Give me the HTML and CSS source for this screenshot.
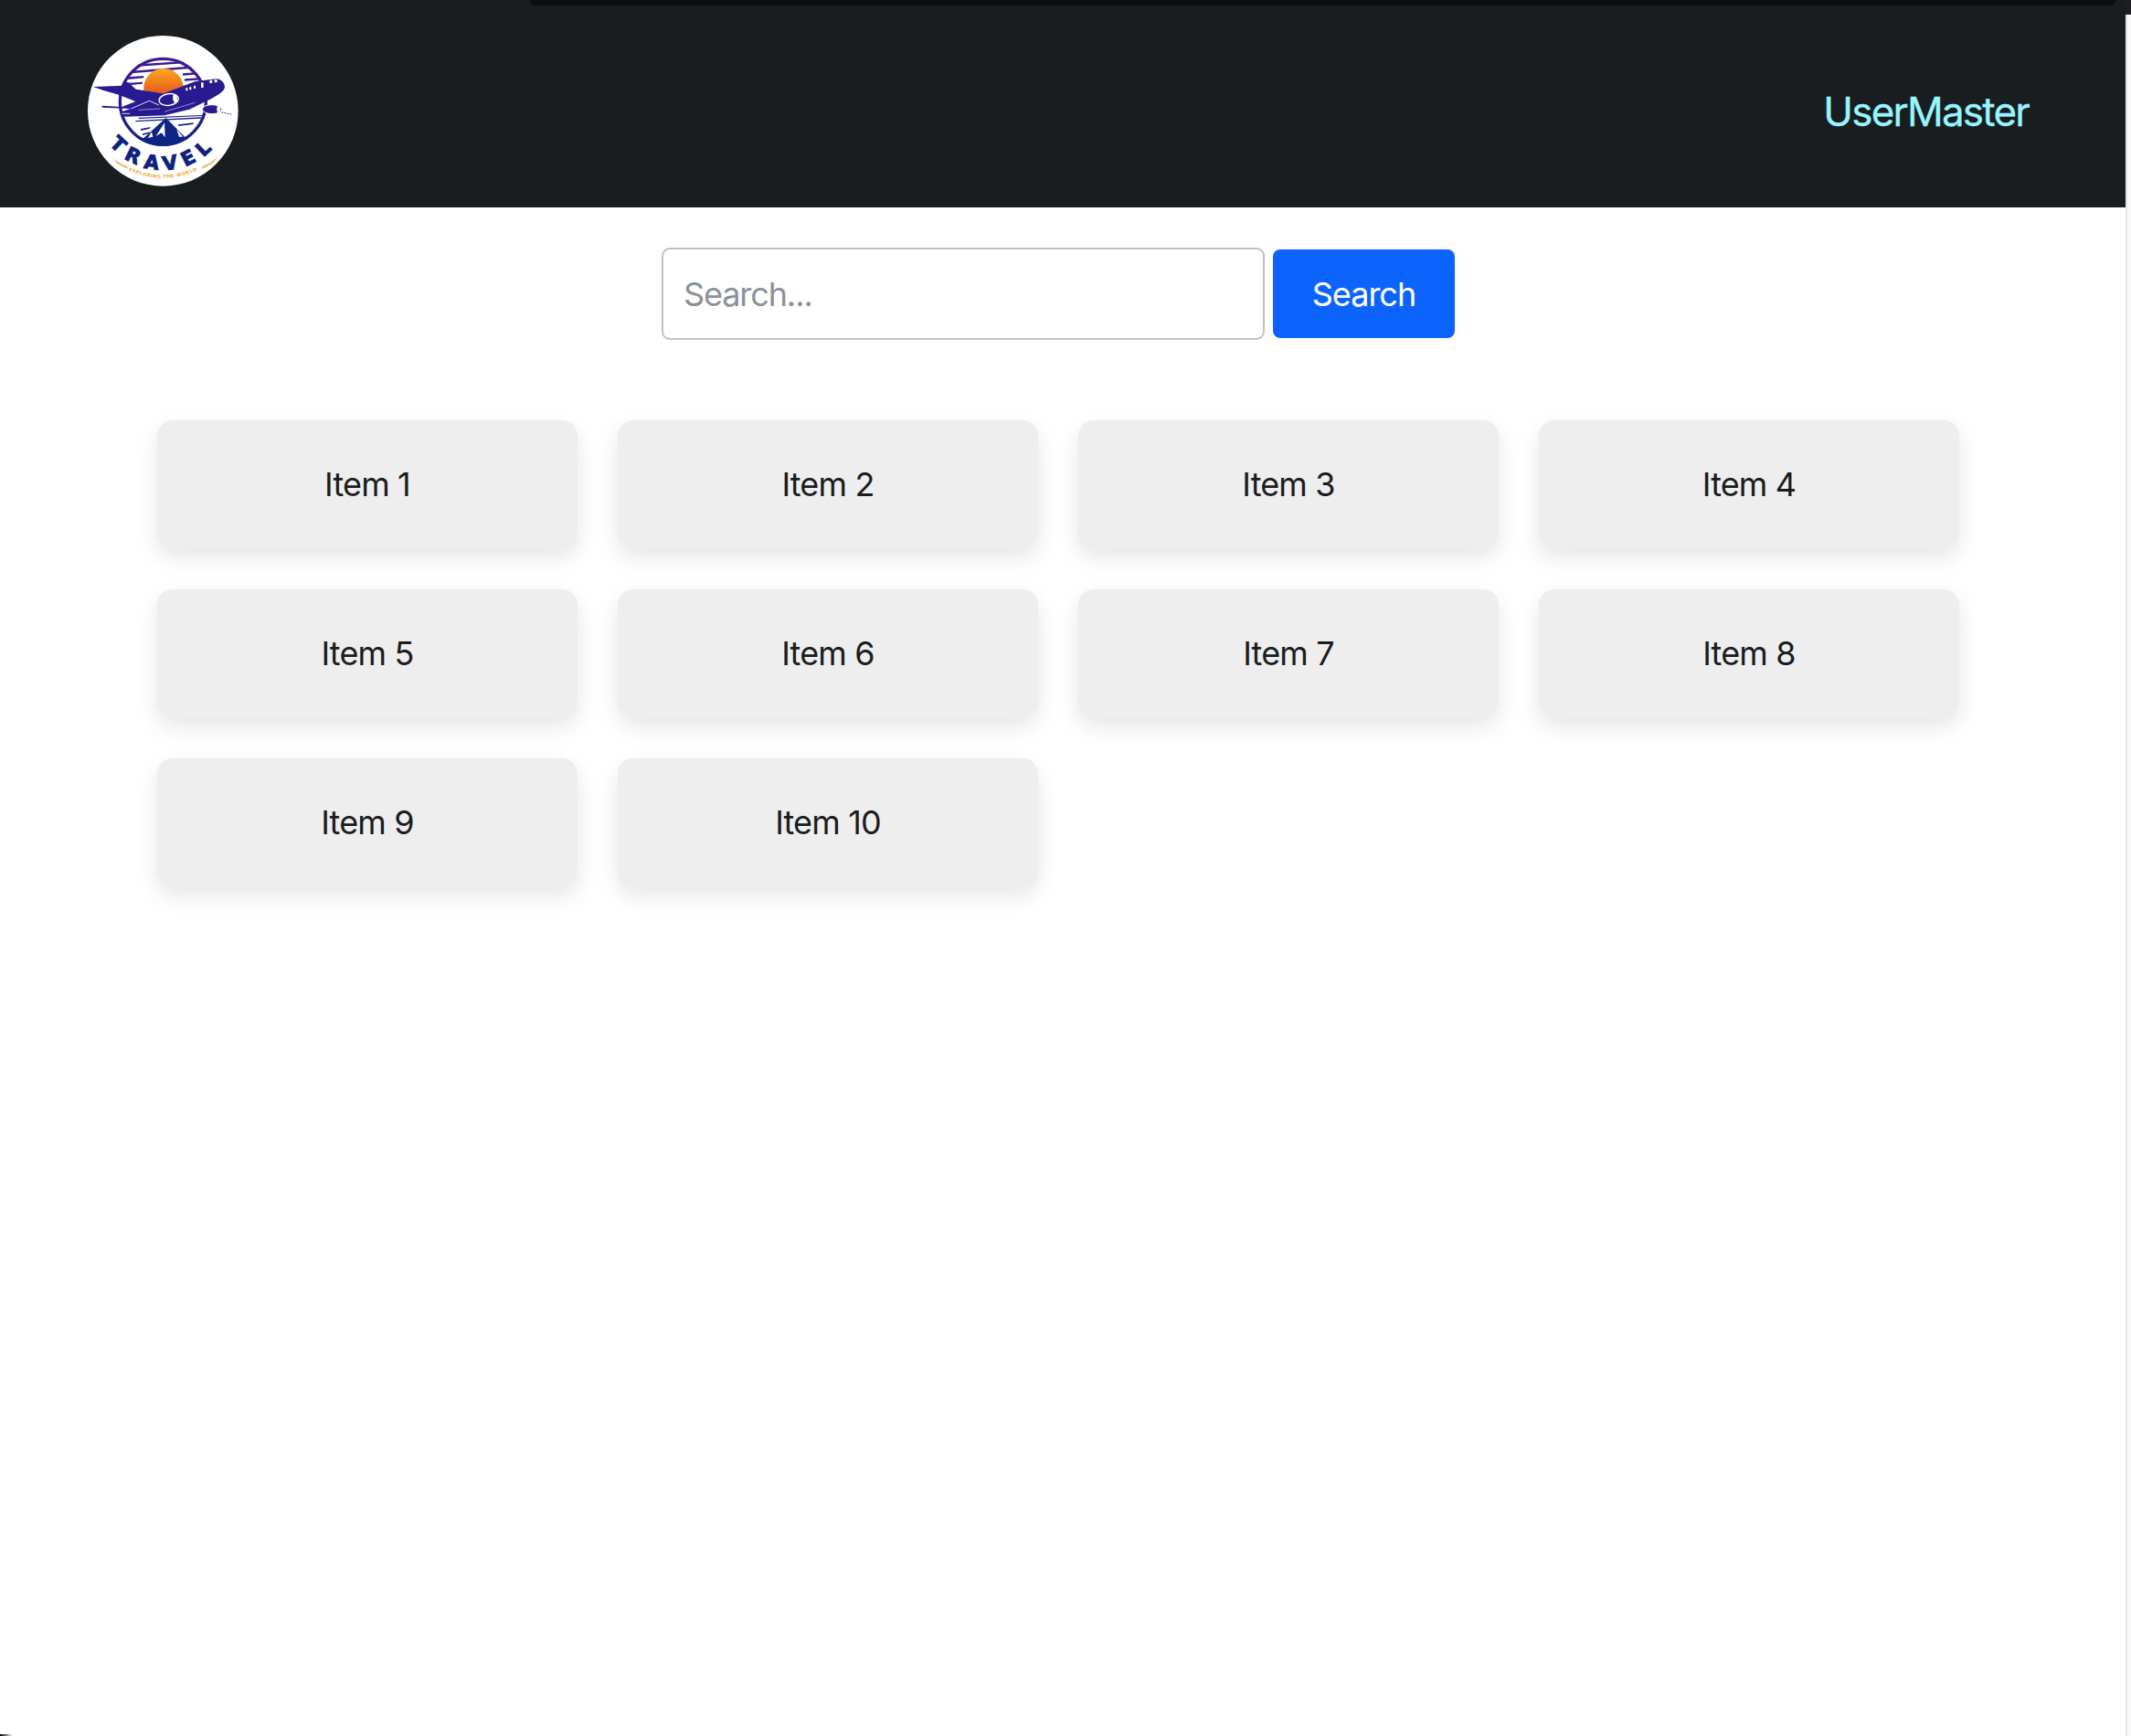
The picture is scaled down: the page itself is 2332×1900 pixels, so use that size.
FILE: index.html
```html
<!DOCTYPE html>
<html lang="en">
<head>
<meta charset="utf-8">
<title>Travel</title>
<link rel="stylesheet" href="styles.css">
</head>
<body>
<div class="window">
  <main class="page">
    <header class="navbar">
      <svg class="logo" viewBox="48 56 495 495" role="img" aria-label="Travel logo">
        <defs>
          <linearGradient id="sun" x1="0" y1="0" x2="0" y2="1">
            <stop offset="0" stop-color="#f9a91f"/>
            <stop offset="1" stop-color="#e9591b"/>
          </linearGradient>
          <linearGradient id="ink" x1="0" y1="0" x2="0" y2="1">
            <stop offset="0" stop-color="#3f1a92"/>
            <stop offset="1" stop-color="#0d2484"/>
          </linearGradient>
          <clipPath id="disc"><circle cx="295" cy="273" r="146"/></clipPath>
        </defs>
        <circle cx="295" cy="303" r="247" fill="#fff"/>
        <circle cx="295" cy="273" r="141" fill="none" stroke="url(#ink)" stroke-width="10"/>
        <g clip-path="url(#disc)">
          <path fill="#3f1a92" d="M215 150L375 139V146L205 158ZM190 172L395 156V163L190 180ZM178 192L232 188V195L178 200ZM360 180L412 176V183L360 187ZM170 212L228 208V214L170 220ZM366 198L424 194V201L366 205Z"/>
          <path fill="#0d2484" d="M140 388L232 392L305 326L370 392L450 386V430H140Z"/>
          <path fill="#fff" d="M300 342L272 386L290 375L302 390ZM340 362L360 388L348 388ZM258 372L246 392L262 388Z"/>
          <path fill="#1a2488" d="M205 335L420 324V328L205 339ZM215 325L440 316V319L215 329ZM222 362L255 356L250 362L222 368ZM228 378L252 372L248 378L228 383ZM345 348L395 342V347L345 353Z"/>
        </g>
        <path fill="url(#sun)" d="M232 236A65 65 0 0 1 362 222L296 246L250 240Z"/>
        <path fill="#2a1a90" d="M66 224L165 220L168 208L182 210L206 232L296 246L402 206L470 198C486 198 498 212 498 224C498 238 476 252 440 270L382 298L300 318L168 322C154 320 152 312 160 306L188 296L96 292L94 286L160 290L205 272L150 250L100 236Z"/>
        <path fill="none" stroke="#fff" stroke-width="2.5" d="M190 296L250 270L282 284M160 312H186"/>
        <path stroke="#fff" stroke-width="1.5" d="M300 306L400 276M215 300L285 296"/>
        <ellipse cx="314" cy="266" rx="32" ry="19" fill="#2a1a90" stroke="#fff" stroke-width="4" transform="rotate(-8 314 266)"/>
        <ellipse cx="335" cy="263" rx="7" ry="15" fill="#fff" transform="rotate(-8 335 263)"/>
        <ellipse cx="456" cy="298" rx="32" ry="15" fill="#2a1a90" stroke="#fff" stroke-width="3"/>
        <ellipse cx="478" cy="297" rx="6" ry="12" fill="#fff"/>
        <path stroke="#2a1a90" stroke-width="3" stroke-dasharray="5 4" d="M488 308L522 315"/>
        <g fill="#fff">
          <rect x="370" y="227" width="6" height="10" rx="2"/>
          <rect x="382" y="224" width="6" height="10" rx="2"/>
          <rect x="396" y="220" width="6" height="10" rx="2"/>
          <rect x="420" y="210" width="8" height="17" rx="2"/>
          <rect x="448" y="202" width="9" height="10" rx="3"/>
          <rect x="464" y="200" width="9" height="10" rx="3"/>
        </g>
        <path id="travelArc" fill="none" d="M90 366A226 226 0 0 0 500 366"/>
        <path id="tagArc" fill="none" d="M145 475A255 255 0 0 0 445 475"/>
        <text class="logo-title"><textPath href="#travelArc" startOffset="50%">TRAVEL</textPath></text>
        <text class="logo-tag"><textPath href="#tagArc" startOffset="50%">EXPLORING THE WORLD</textPath></text>
        <path fill="none" stroke="#f2a33c" stroke-width="3" d="M133 461C145 472 160 480 178 487M140 470C150 478 163 485 178 491M472 457C460 470 445 480 424 487M464 468C452 477 440 484 424 491"/>
      </svg>
      <a class="user" href="#">UserMaster</a>
    </header>
    <section class="content">
      <form class="search">
        <input class="search-input" type="text" placeholder="Search...">
        <button class="search-button" type="button">Search</button>
      </form>
      <div class="grid">
        <div class="item">Item 1</div>
        <div class="item">Item 2</div>
        <div class="item">Item 3</div>
        <div class="item">Item 4</div>
        <div class="item">Item 5</div>
        <div class="item">Item 6</div>
        <div class="item">Item 7</div>
        <div class="item">Item 8</div>
        <div class="item">Item 9</div>
        <div class="item">Item 10</div>
      </div>
    </section>
  </main>
  <div class="edge"></div>
  <div class="notch"></div>
  <div class="corner"></div>
</div>
</body>
</html>
```

FILE: styles.css
```css
* { box-sizing: border-box; }
html, body { margin: 0; height: 100%; }
body { font-family: Inter, "Liberation Sans", sans-serif; color: #1a1d20; }
.window { position: relative; display: flex; height: 100vh; overflow: hidden; background: #1c1e21; }
.page { flex: 1; min-width: 0; background: #fff; display: flex; flex-direction: column; }
.edge { width: 6px; margin-top: 16px; background: #f9f9f9; border-left: 2px solid #e3e3e3; }
.navbar { height: 227px; flex: none; display: flex; align-items: center; justify-content: space-between; padding: 15px 106px 0 96px; background: #1a1d20; }
.logo { width: 165px; height: 165px; display: block; }
.logo-title { font: 700 64px "DejaVu Sans", sans-serif; fill: #10207f; stroke: #10207f; stroke-width: 3px; text-anchor: middle; letter-spacing: 22px; }
.logo-tag { font: 700 15px "DejaVu Sans", sans-serif; fill: #f2a33c; text-anchor: middle; letter-spacing: 1.6px; }
.user { font-size: 44px; letter-spacing: -1.8px; color: #96f5ff; text-decoration: none; padding-top: 2px; -webkit-text-stroke: .3px #96f5ff; }
.content { padding: 44px 182px 0 172px; }
.search { display: flex; justify-content: center; align-items: center; gap: 9px; }
.search-input { width: 660px; height: 101px; padding: 0 22px; border: 2px solid #c0c0c0; border-radius: 9px; font: 36px Inter, sans-serif; letter-spacing: -1.1px; color: #1a1d20; background: #fff; outline: none; }
.search-input::placeholder { color: #8a919b; opacity: 1; }
.search-button { width: 199px; height: 97px; padding: 0; border: 0; border-radius: 8px; background: #0d64fd; color: #fff; font: 36px Inter, sans-serif; letter-spacing: -1px; }
.grid { display: grid; grid-template-columns: repeat(4, 460px); gap: 45px 44px; margin-top: 88px; }
.item { height: 140px; display: flex; align-items: center; justify-content: center; background: #eee; border-radius: 17px; box-shadow: 0 10px 24px rgba(0, 0, 0, .1); font-size: 36px; letter-spacing: -.85px; }
.notch { position: absolute; top: 0; left: 580px; width: 1736px; height: 6px; background: #0c0e12; border-radius: 0 0 14px 14px; }
.corner { position: absolute; left: 0; bottom: 0; width: 14px; height: 2px; background: linear-gradient(90deg, #000, rgba(0, 0, 0, 0)); }
```
